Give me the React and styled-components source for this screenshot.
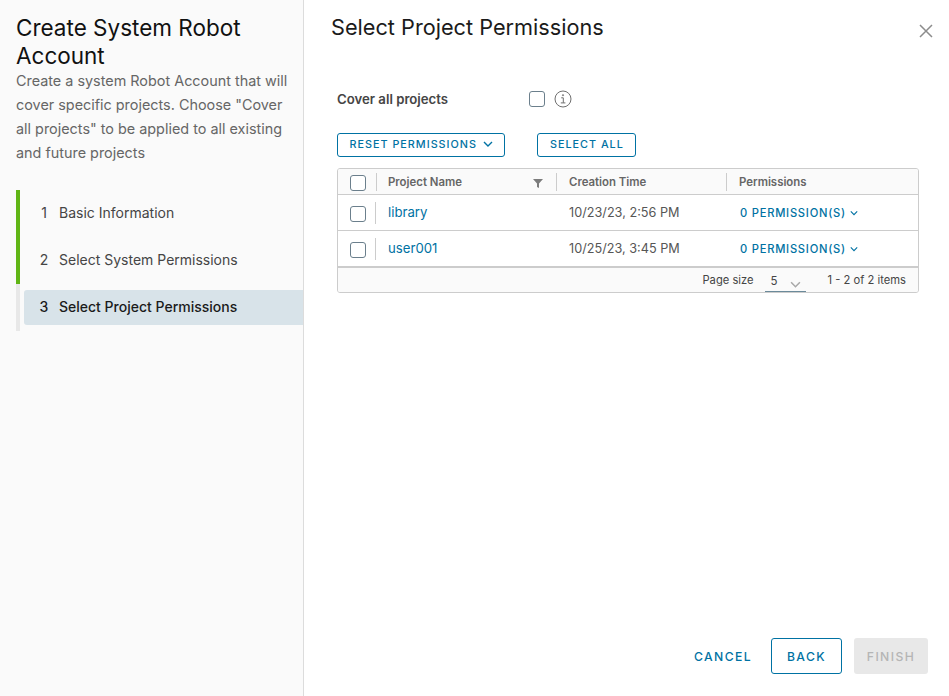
import React from "react";
import styled, { createGlobalStyle } from "styled-components";

const GlobalStyle = createGlobalStyle`
  html, body { margin: 0; padding: 0; height: 100%; background: #fff; }
  body { font-family: "Inter", "Liberation Sans", sans-serif; color: #565656; overflow: hidden; }
  #root { height: 100%; }
`;

const Page = styled.div`
  display: flex;
  width: 949px;
  height: 696px;
  overflow: hidden;
`;

const Sidebar = styled.aside`
  width: 304px;
  flex: none;
  box-sizing: border-box;
  padding: 14px 0 0 16px;
  background: #fafafa;
  border-right: 1px solid #dcdcdc;
`;

const WizardTitle = styled.h1`
  margin: 0;
  font-size: 22.5px;
  font-weight: 400;
  line-height: 28px;
  color: #111;
`;

const WizardText = styled.p`
  margin: -1px 0 0;
  width: 280px;
  font-size: 14.4px;
  line-height: 24px;
  color: #666;
`;

const Steps = styled.ol`
  list-style: none;
  margin: 25px 0 0;
  padding: 0;
`;

const Step = styled.li`
  box-sizing: border-box;
  height: 47px;
  border-left: 4px solid ${(p) => (p.$done ? "#60b515" : "#e8e8e8")};
  padding: ${(p) => (p.$active ? "6px 0 6px 4px" : "0 0 0 4px")};
  display: flex;
`;

const StepInner = styled.div`
  flex: 1;
  display: flex;
  align-items: center;
  padding: 0 0 2px 15px;
  border-radius: 3px 0 0 3px;
  background: ${(p) => (p.$active ? "#d8e3e9" : "transparent")};
  color: ${(p) => (p.$active ? "#1b1b1b" : "#454545")};
  font-size: 14px;
  font-weight: ${(p) => (p.$active ? 500 : 400)};
`;

const StepNumber = styled.span`
  width: 10px;
  margin-right: 10px;
  text-align: center;
`;

const Main = styled.main`
  flex: 1;
  min-width: 0;
  display: flex;
  flex-direction: column;
  padding: 13px 21px 22px 27px;
  box-sizing: border-box;
`;

const TitleRow = styled.div`
  display: flex;
  justify-content: space-between;
`;

const PageTitle = styled.h2`
  margin: 0;
  font-size: 21.7px;
  font-weight: 400;
  line-height: 28px;
  color: #1b1b1b;
`;

const CloseIcon = styled.svg`
  width: 14px;
  height: 14px;
  margin: 11px -5px 0 0;
  stroke: #8c8c8c;
  stroke-width: 1.5;
  fill: none;
`;

const Content = styled.div`
  padding: 0 9px 0 6px;
  width: 582px;
`;

const CoverRow = styled.div`
  display: flex;
  align-items: center;
  margin-top: 42px;
  height: 32px;
`;

const CoverLabel = styled.label`
  width: 192px;
  font-size: 13.2px;
  font-weight: 600;
  color: #454545;
`;

const Checkbox = styled.span`
  display: block;
  width: 16px;
  height: 16px;
  box-sizing: border-box;
  border: 1px solid #6b7f8c;
  border-radius: 3px;
  background: #fff;
`;

const RowCheckbox = styled(Checkbox)`
  margin-top: 2px;
`;

const InfoIcon = styled.svg`
  width: 18px;
  height: 18px;
  margin-left: 9px;
  stroke: #6f6f6f;
  fill: none;
`;

const Actions = styled.div`
  display: flex;
  gap: 32px;
  margin-top: 18px;
`;

const OutlineButton = styled.button`
  display: inline-flex;
  align-items: center;
  justify-content: center;
  gap: 6px;
  height: 24px;
  box-sizing: border-box;
  padding: 0 11.5px 2px;
  background: #fff;
  border: 1px solid #0072a3;
  border-radius: 3px;
  color: #0072a3;
  font: 500 10.8px "Inter", sans-serif;
  letter-spacing: 1px;
  white-space: nowrap;
`;

const Chevron = styled.svg`
  width: ${(p) => p.$size || 10}px;
  height: ${(p) => p.$size || 10}px;
  stroke: ${(p) => p.$color || "#0072a3"};
  stroke-width: 1.4;
  fill: none;
  flex: none;
`;

const Table = styled.div`
  margin-top: 11px;
  box-sizing: border-box;
  width: 582px;
  border: 1px solid #ccc;
  border-radius: 3px;
  overflow: hidden;
`;

const Row = styled.div`
  display: grid;
  grid-template-columns: 39px 180px 170px 1fr;
  height: ${(p) => (p.$head ? 26 : 36)}px;
  background: ${(p) => (p.$head ? "#fafafa" : "#fff")};
  border-bottom: 1px solid #ccc;
  box-sizing: border-box;
`;

const Cell = styled.div`
  display: flex;
  align-items: center;
  padding-left: ${(p) => p.$pad || 12}px;
  font-size: ${(p) => (p.$head ? 11.4 : 12.7)}px;
  font-weight: ${(p) => (p.$head ? 600 : 400)};
  color: ${(p) => (p.$head ? "#666" : "#565656")};
  position: relative;
  &::after {
    content: "";
    display: ${(p) => (p.$divider ? "block" : "none")};
    position: absolute;
    right: ${(p) => (p.$head ? 0 : 1)}px;
    top: ${(p) => (p.$head ? 4 : 7)}px;
    bottom: ${(p) => (p.$head ? 3 : 6)}px;
    width: 1px;
    background: #ccc;
  }
`;

const NameLink = styled.a`
  color: #0072a3;
  font-size: 13.2px;
  margin-top: -2px;
`;

const FilterIcon = styled.svg`
  width: 10px;
  height: 10px;
  fill: #7c7c7c;
  margin-left: auto;
  margin-right: 14px;
  margin-top: 3px;
`;

const PermissionLink = styled.a`
  display: inline-flex;
  align-items: center;
  gap: 4px;
  margin-left: 1px;
  color: #0072a3;
  font-size: 11.2px;
  font-weight: 500;
  letter-spacing: 0.75px;
`;

const TableFooter = styled.div`
  display: flex;
  align-items: center;
  justify-content: flex-end;
  height: 26px;
  box-sizing: border-box;
  padding-right: 12px;
  background: #fafafa;
  border-top: 2px solid #ccc;
  margin-top: -1px;
  font-size: 11.2px;
  color: #454545;
`;

const PageSize = styled.div`
  display: flex;
  align-items: flex-end;
  justify-content: space-between;
  width: 41px;
  height: 24px;
  box-sizing: border-box;
  margin: 0 22px 0 11px;
  padding: 0 0 3px 6px;
  border-bottom: 1px solid #6b8a9a;
  font-size: 11.5px;
`;

const PageChevron = styled(Chevron)`
  margin-right: 5px;
  margin-bottom: -2px;
`;

const Footer = styled.footer`
  margin-top: auto;
  display: flex;
  align-items: center;
  justify-content: flex-end;
  gap: 12px;
`;

const FooterButton = styled.button`
  height: 36px;
  box-sizing: border-box;
  padding: 0;
  width: ${(p) => p.$w}px;
  margin-right: ${(p) => p.$gap || 0}px;
  border: 1px solid ${(p) => (p.$kind === "outline" ? "#0072a3" : "transparent")};
  border-radius: 3px;
  background: ${(p) => (p.$kind === "disabled" ? "#e8e8e8" : "transparent")};
  color: ${(p) => (p.$kind === "disabled" ? "#b5b5b5" : "#0072a3")};
  font: 500 12.2px "Inter", sans-serif;
  letter-spacing: 1.4px;
`;

const rows = [
  { name: "library", time: "10/23/23, 2:56 PM" },
  { name: "user001", time: "10/25/23, 3:45 PM" },
];

const steps = ["Basic Information", "Select System Permissions", "Select Project Permissions"];

const ChevronDown = (props) => (
  <Chevron viewBox="0 0 10 10" {...props}>
    <path d="M1 3l4 4 4-4" />
  </Chevron>
);

export default function App() {
  return (
    <Page>
      <GlobalStyle />
      <Sidebar>
        <WizardTitle>Create System Robot Account</WizardTitle>
        <WizardText>
          Create a system Robot Account that will cover specific projects. Choose "Cover all
          projects" to be applied to all existing and future projects
        </WizardText>
        <Steps>
          {steps.map((s, i) => (
            <Step key={s} $done={i < 2} $active={i === 2}>
              <StepInner $active={i === 2}>
                <StepNumber>{i + 1}</StepNumber>
                {s}
              </StepInner>
            </Step>
          ))}
        </Steps>
      </Sidebar>
      <Main>
        <TitleRow>
          <PageTitle>Select Project Permissions</PageTitle>
          <CloseIcon viewBox="0 0 14 14">
            <path d="M1 1l12 12M13 1L1 13" />
          </CloseIcon>
        </TitleRow>
        <Content>
          <CoverRow>
            <CoverLabel>Cover all projects</CoverLabel>
            <Checkbox />
            <InfoIcon viewBox="0 0 18 18">
              <circle cx="9" cy="9" r="8" />
              <path d="M7.2 7.8h2.1v5M6.8 12.9h4.6" />
              <circle cx="9" cy="5.2" r="0.6" />
            </InfoIcon>
          </CoverRow>
          <Actions>
            <OutlineButton>
              RESET PERMISSIONS
              <ChevronDown />
            </OutlineButton>
            <OutlineButton>SELECT ALL</OutlineButton>
          </Actions>
          <Table>
            <Row $head>
              <Cell $head $divider>
                <RowCheckbox />
              </Cell>
              <Cell $head $pad={11} $divider>
                Project Name
                <FilterIcon viewBox="0 0 10 10">
                  <path d="M0 1h10L6 5.5V10L4 9V5.5z" />
                </FilterIcon>
              </Cell>
              <Cell $head $divider>Creation Time</Cell>
              <Cell $head>Permissions</Cell>
            </Row>
            {rows.map((r) => (
              <Row key={r.name}>
                <Cell $divider>
                  <RowCheckbox />
                </Cell>
                <Cell $pad={11}>
                  <NameLink>{r.name}</NameLink>
                </Cell>
                <Cell>{r.time}</Cell>
                <Cell>
                  <PermissionLink>
                    0 PERMISSION(S)
                    <ChevronDown $size={8} />
                  </PermissionLink>
                </Cell>
              </Row>
            ))}
            <TableFooter>
              Page size
              <PageSize>
                5
                <PageChevron $size={11} $color="#a8a8a8" viewBox="0 0 10 10">
                  <path d="M1 3l4 4 4-4" />
                </PageChevron>
              </PageSize>
              1 - 2 of 2 items
            </TableFooter>
          </Table>
        </Content>
        <Footer>
          <FooterButton $w={56} $gap={10}>CANCEL</FooterButton>
          <FooterButton $w={71} $kind="outline">BACK</FooterButton>
          <FooterButton $w={74} $kind="disabled">FINISH</FooterButton>
        </Footer>
      </Main>
    </Page>
  );
}
